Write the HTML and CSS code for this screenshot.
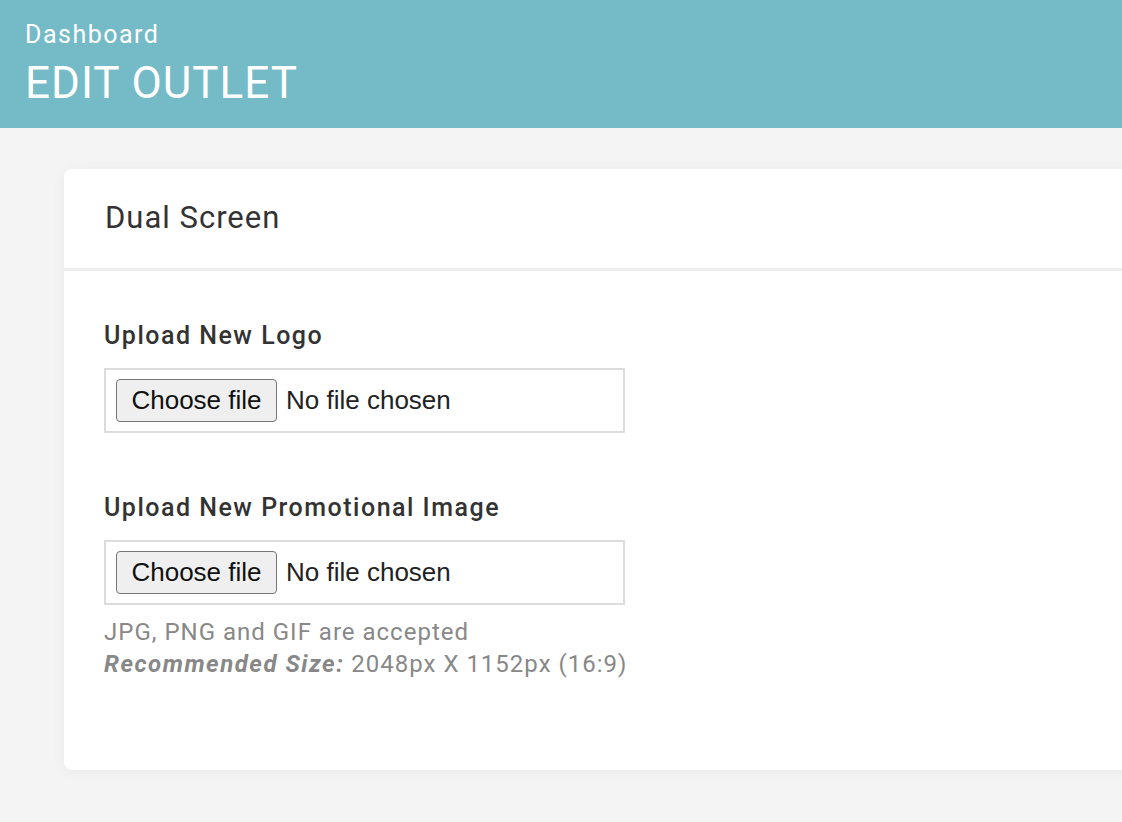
FILE: index.html
```
<!DOCTYPE html>
<html lang="en">
<head>
<meta charset="utf-8">
<title>Edit Outlet</title>
<link rel="stylesheet" href="styles.css">
</head>
<body>

<div class="page-header">
  <div class="crumb">Dashboard</div>
  <h1 class="page-title">EDIT OUTLET</h1>
</div>

<div class="content">
  <div class="card">
    <div class="card-heading">Dual Screen</div>
    <div class="card-body">
      <div class="form-group">
        <div class="field-label">Upload New Logo</div>
        <label class="file-box">
          <input type="file" class="file-input">
          <span class="file-btn">Choose file</span>
          <span class="file-name">No file chosen</span>
        </label>
      </div>
      <div class="form-group">
        <div class="field-label">Upload New Promotional Image</div>
        <label class="file-box">
          <input type="file" class="file-input">
          <span class="file-btn">Choose file</span>
          <span class="file-name">No file chosen</span>
        </label>
        <p class="help-text">JPG, PNG and GIF are accepted<br>
        <b><i>Recommended Size:</i></b> 2048px X 1152px (16:9)</p>
      </div>
    </div>
  </div>
</div>

</body>
</html>
```

FILE: styles.css
```
html, body {
    margin: 0;
    padding: 0;
}
body {
    background-color: #f4f4f4;
    font-family: Roboto, "Liberation Sans", Arial, sans-serif;
    color: #333;
    overflow: hidden;
    height: 822px;
}

.page-header {
    background-color: #75bac7;
    color: #fff;
    height: 128px;
    box-sizing: border-box;
    padding: 19px 25px 0;
}
.crumb {
    font-size: 25px;
    letter-spacing: 1.5px;
    line-height: 32px;
}
.page-title {
    margin: 6px 0 0;
    font-weight: 400;
    font-size: 44px;
    letter-spacing: 1px;
    line-height: 52px;
}

.content {
    padding: 41px 0 0 64px;
}
.card {
    background-color: #fff;
    border-radius: 8px;
    margin-right: -40px;
    height: 601px;
    box-shadow: 0 2px 14px rgba(0,0,0,.05);
}
.card-heading {
    height: 102px;
    box-sizing: border-box;
    padding: 30px 41px 0;
    font-size: 31px;
    letter-spacing: 1px;
    line-height: 38px;
    border-bottom: 3px solid #eee;
}
.card-body {
    padding: 50px 40px 0;
}
.form-group {
    margin-bottom: 60px;
}
.field-label {
    font-size: 25px;
    font-weight: 500;
    letter-spacing: 1.5px;
    line-height: 30px;
    margin-bottom: 17px;
}
.file-box {
    display: flex;
    align-items: center;
    width: 521px;
    height: 65px;
    box-sizing: border-box;
    border: 2px solid #dcdcdc;
    padding: 0 10px;
    cursor: pointer;
}
.file-input {
    display: none;
}
.file-btn {
    display: flex;
    align-items: center;
    justify-content: center;
    box-sizing: border-box;
    width: 161px;
    height: 43px;
    margin-right: 9px;
    font-family: "Liberation Sans", Arial, sans-serif;
    font-size: 26px;
    color: #111;
    background-color: #efefef;
    border: 1px solid #767676;
    border-radius: 4px;
}
.file-name {
    font-family: "Liberation Sans", Arial, sans-serif;
    font-size: 26px;
    color: #222;
}
.help-text {
    margin: 11px 0 0;
    color: #888;
    font-size: 24px;
    letter-spacing: 1px;
    line-height: 32px;
}
.help-text b {
    font-weight: 700;
    letter-spacing: 1.5px;
}
```
